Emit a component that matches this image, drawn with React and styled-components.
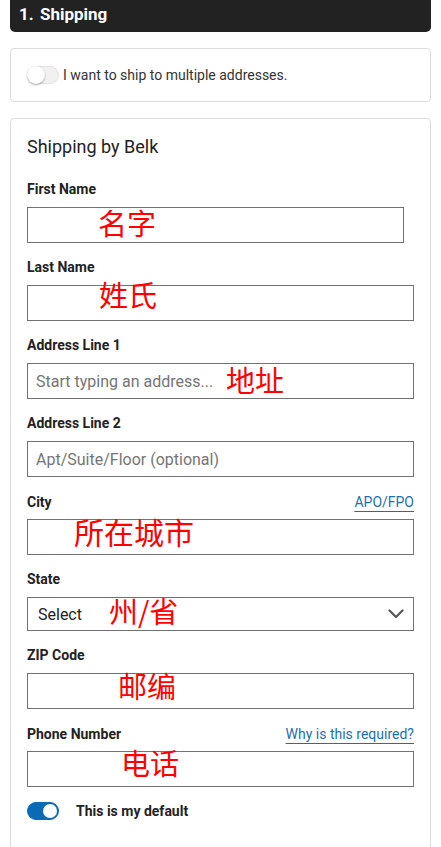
import React from "react";
import styled, { createGlobalStyle } from "styled-components";

const Global = createGlobalStyle`
  html, body { margin: 0; padding: 0; background: #fff; }
  body { font-family: Roboto, "Noto Sans", Arial, sans-serif; color: #222; }
  * { box-sizing: border-box; }
`;

const Page = styled.div`
  width: 421px;
  margin-left: 10px;
  display: flex;
  flex-direction: column;
  gap: 16px;
`;

const Header = styled.div`
  height: 32px;
  background: #222;
  border-radius: 0 0 5px 5px;
  color: #fff;
  font-weight: 700;
  font-size: 17px;
  line-height: 28px;
  padding-left: 9px;
  word-spacing: 2px;
`;

const Card = styled.div`
  border: 1px solid #ddd;
  border-radius: 4px;
  width: 421px;
  padding: ${(p) => p.$pad || "16px"};
`;

const Row = styled.div`
  display: flex;
  align-items: center;
  gap: ${(p) => p.$gap || "4px"};
  height: ${(p) => p.$h || "auto"};
  margin-top: ${(p) => p.$mt || "0"};
`;

const Track = styled.span`
  position: relative;
  display: inline-block;
  width: 32px;
  height: 18px;
  border-radius: 9px;
  flex: none;
  background: ${(p) => (p.$on ? "#0b6ab5" : "#f1f1f1")};
  border: 1px solid ${(p) => (p.$on ? "#0b6ab5" : "#e2e2e2")};
`;

const Knob = styled.span`
  position: absolute;
  top: ${(p) => (p.$on ? "1px" : "-1px")};
  left: ${(p) => (p.$on ? "15px" : "-1px")};
  width: ${(p) => (p.$on ? "14px" : "18px")};
  height: ${(p) => (p.$on ? "14px" : "18px")};
  border-radius: 50%;
  background: #fff;
  box-shadow: ${(p) => (p.$on ? "none" : "0 1px 2px rgba(0,0,0,0.35)")};
`;

const ToggleText = styled.span`
  font-size: 14px;
  color: ${(p) => (p.$bold ? "#222" : "#333")};
  font-weight: ${(p) => (p.$bold ? 700 : 400)};
`;

const Title = styled.div`
  font-size: 18px;
  line-height: 24px;
  color: #222;
  margin-bottom: 21px;
`;

const Field = styled.div`
  margin-bottom: 15px;
`;

const LabelRow = styled.div`
  display: flex;
  justify-content: space-between;
  align-items: baseline;
  height: 20px;
  margin-bottom: 7px;
  width: 387px;
`;

const Label = styled.label`
  font-size: 14px;
  font-weight: 700;
  line-height: 19px;
  color: #222;
`;

const Link = styled.a`
  font-size: 14px;
  line-height: 20px;
  color: #1d6fb1;
  text-decoration: underline;
  text-underline-offset: 4px;
  text-decoration-thickness: 1px;
  cursor: pointer;
`;

const Wrap = styled.div`
  position: relative;
  width: ${(p) => p.$w || "387px"};
  height: ${(p) => p.$h || "36px"};
`;

const TextInput = styled.input`
  width: 100%;
  height: 100%;
  border: 1px solid #727272;
  border-radius: 0;
  padding: 0 8px;
  font-family: Roboto, Arial, sans-serif;
  font-size: 16px;
  color: #222;
  background: #fff;
  outline: none;
  &::placeholder { color: #757575; }
`;

const SelectBox = styled.div`
  width: 100%;
  height: 100%;
  border: 1px solid #727272;
  padding: 0 9px 0 10px;
  display: flex;
  align-items: center;
  justify-content: space-between;
  font-size: 16px;
  color: #222;
`;

const Note = styled.span`
  position: absolute;
  left: ${(p) => p.$x}px;
  top: ${(p) => p.$y}px;
  font-family: "Noto Sans CJK SC", sans-serif;
  font-size: ${(p) => p.$s || 29}px;
  line-height: 1;
  color: #ff0000;
  white-space: nowrap;
  pointer-events: none;
`;

const Toggle = ({ on }) => (
  <Track $on={on}>
    <Knob $on={on} />
  </Track>
);

const Chevron = () => (
  <svg width="16" height="10" viewBox="0 0 16 10" fill="none">
    <path d="M1.5 1.5 L8 8 L14.5 1.5" stroke="#555" strokeWidth="2.2" strokeLinecap="round" strokeLinejoin="round" />
  </svg>
);

const InputField = ({ label, link, placeholder, note, w }) => (
  <Field>
    <LabelRow>
      <Label>{label}</Label>
      {link && <Link>{link}</Link>}
    </LabelRow>
    <Wrap $w={w}>
      <TextInput placeholder={placeholder} />
      {note && (
        <Note $x={note.x} $y={note.y} $s={note.s}>
          {note.t}
        </Note>
      )}
    </Wrap>
  </Field>
);

export default function App() {
  return (
    <>
      <Global />
      <Page>
        <Header>1. Shipping</Header>
        <Card $pad="0 16px">
          <Row $h="52px">
            <Toggle on={false} />
            <ToggleText>I want to ship to multiple addresses.</ToggleText>
          </Row>
        </Card>
        <Card $pad="16px 16px 30px">
          <Title>Shipping by Belk</Title>
          <InputField label="First Name" w="377px" note={{ t: "名字", x: 71, y: 1 }} />
          <InputField label="Last Name" note={{ t: "姓氏", x: 72, y: -5 }} />
          <InputField
            label="Address Line 1"
            placeholder="Start typing an address..."
            note={{ t: "地址", x: 199, y: 2 }}
          />
          <InputField label="Address Line 2" placeholder="Apt/Suite/Floor (optional)" />
          <InputField label="City" link="APO/FPO" note={{ t: "所在城市", x: 47, y: -3, s: 30 }} />
          <Field>
            <LabelRow>
              <Label>State</Label>
            </LabelRow>
            <Wrap $h="34px">
              <SelectBox>
                <span>Select</span>
                <Chevron />
              </SelectBox>
              <Note $x={82} $y={-1}>州/省</Note>
            </Wrap>
          </Field>
          <InputField label="ZIP Code" note={{ t: "邮编", x: 91, y: -2 }} />
          <InputField label="Phone Number" link="Why is this required?" note={{ t: "电话", x: 94, y: -3 }} />
          <Row $gap="17px" $h="18px" $mt="1px">
            <Toggle on={true} />
            <ToggleText $bold>This is my default</ToggleText>
          </Row>
        </Card>
      </Page>
    </>
  );
}
